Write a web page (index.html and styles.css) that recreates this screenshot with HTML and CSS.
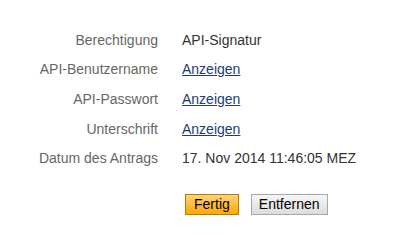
FILE: index.html
```html
<!DOCTYPE html>
<html lang="de">
<head>
    <meta charset="UTF-8">
    <title>API-Zugriff</title>
    <link rel="stylesheet" href="styles.css">
</head>
<body>
    <div class="details">
        <div class="row">
            <span class="label">Berechtigung</span>
            <span class="value">API-Signatur</span>
        </div>
        <div class="row">
            <span class="label">API-Benutzername</span>
            <span class="value"><a href="#">Anzeigen</a></span>
        </div>
        <div class="row">
            <span class="label">API-Passwort</span>
            <span class="value"><a href="#">Anzeigen</a></span>
        </div>
        <div class="row">
            <span class="label">Unterschrift</span>
            <span class="value"><a href="#">Anzeigen</a></span>
        </div>
        <div class="row">
            <span class="label">Datum des Antrags</span>
            <span class="value">17. Nov 2014 11:46:05 MEZ</span>
        </div>
    </div>
    <div class="actions">
        <button class="btn btn-primary">Fertig</button>
        <button class="btn">Entfernen</button>
    </div>
</body>
</html>
```

FILE: styles.css
```css
body {
    margin: 0;
    padding: 25px 0 0 0;
    font-family: "Liberation Sans", Arial, sans-serif;
    font-size: 14px;
    color: #333;
    background: #fff;
}

.details {
    display: flex;
    flex-direction: column;
}

.row {
    display: grid;
    grid-template-columns: 158px 1fr;
    column-gap: 24px;
    height: 29.6px;
    align-items: center;
}

.label {
    text-align: right;
    color: #666;
}

.value a {
    color: #1a3c7a;
    text-decoration: underline;
}

.actions {
    display: flex;
    gap: 12px;
    padding-left: 185px;
    margin-top: 21px;
}

.btn {
    font-family: "Liberation Sans", Arial, sans-serif;
    font-size: 14px;
    color: #000;
    height: 21px;
    padding: 0 7px;
    border: 1px solid #a8a8a8;
    border-radius: 0;
    background: linear-gradient(#f6f6f6, #dcdcdc);
    cursor: pointer;
}

.btn-primary {
    padding: 0 8px;
    border-color: #b97c0c;
    background: linear-gradient(#ffd37a, #ffa800);
}
```
